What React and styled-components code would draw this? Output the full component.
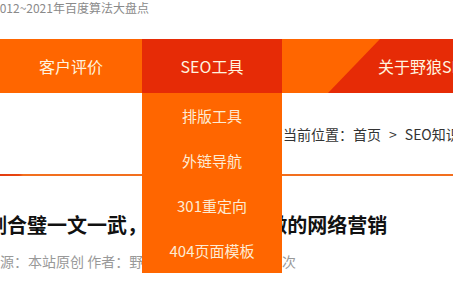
import React from 'react';
import styled, { createGlobalStyle } from 'styled-components';

const GlobalStyle = createGlobalStyle`
    html, body{
        margin: 0;
        padding: 0;
        background: #fff;
        overflow: hidden;
    }
    body{
        font-family: "Noto Sans CJK SC", "Noto Sans", sans-serif;
    }
`;

const Page = styled.div`
    position: relative;
    width: 453px;
    height: 301px;
    overflow: hidden;
`;

const TopNote = styled.div`
    height: 39px;
    font-size: 12px;
    line-height: 16px;
    color: #8a8a8a;
    margin-left: -7px;
    white-space: nowrap;
`;

const Nav = styled.ul`
    display: flex;
    height: 54px;
    margin: 0;
    padding: 0;
    list-style: none;
    background: #ff6600;
`;

const NavItem = styled.li`
    position: relative;
    flex: 0 0 ${p => p.$width}px;
    display: flex;
    align-items: center;
    justify-content: center;
    font-size: 16px;
    color: #fff3df;
    background: ${p => p.$active ? '#e62b06' : '#ff6600'};
`;

const LastItem = styled.li`
    position: relative;
    flex: 1 1 auto;
    min-width: 0;
    display: flex;
    align-items: center;
    padding-left: 96px;
    font-size: 16px;
    color: #fff3df;
    background: #e62b06;
    white-space: nowrap;
    overflow: hidden;
    &::before{
        content: "";
        position: absolute;
        inset: 0;
        background: #ff6600;
        clip-path: polygon(0 0, 98px 0, 46px 100%, 0 100%);
    }
    span{
        position: relative;
    }
`;

const Dropdown = styled.ul`
    position: absolute;
    top: 54px;
    left: 0;
    width: 140px;
    margin: 0;
    padding: 0;
    list-style: none;
    background: #ff6600;
    z-index: 5;
`;

const DropItem = styled.li`
    height: 45px;
    display: flex;
    align-items: center;
    justify-content: center;
    font-size: 15px;
    color: #fdebd3;
`;

const Crumbs = styled.div`
    height: 80px;
    display: flex;
    align-items: center;
    padding-left: 283px;
    padding-top: 1px;
    font-size: 14px;
    color: #333;
    white-space: nowrap;
    border-bottom: 2px solid transparent;
    border-image: linear-gradient(to right, #e23b10 0, #e8460f 20px, #f26f1e 24px, #f26f1e 100%) 1;
`;

const Sep = styled.span`
    margin: 0 8px;
`;

const Title = styled.h1`
    margin: 37px 0 0 -33px;
    font-size: 20px;
    line-height: 24px;
    font-weight: bold;
    color: #111;
    white-space: nowrap;
`;

const Meta = styled.div`
    margin: 15px 0 0 -14px;
    font-size: 14px;
    line-height: 18px;
    color: #999;
    white-space: nowrap;
`;

const subMenu = ['排版工具', '外链导航', '301重定向', '404页面模板'];

export default function App(){
    return (
        <Page>
            <GlobalStyle />
            <TopNote>2012~2021年百度算法大盘点</TopNote>
            <Nav>
                <NavItem $width={142}>客户评价</NavItem>
                <NavItem $width={140} $active>
                    SEO工具
                    <Dropdown>
                        {subMenu.map(item => <DropItem key={item}>{item}</DropItem>)}
                    </Dropdown>
                </NavItem>
                <LastItem><span>关于野狼SEO</span></LastItem>
            </Nav>
            <Crumbs>当前位置：首页<Sep>&gt;</Sep>SEO知识</Crumbs>
            <Title>刀剑合璧一文一武，野狼SEO怎么做的网络营销</Title>
            <Meta>来源：本站原创 作者：野狼SEO 浏览量：12345次</Meta>
        </Page>
    );
}
